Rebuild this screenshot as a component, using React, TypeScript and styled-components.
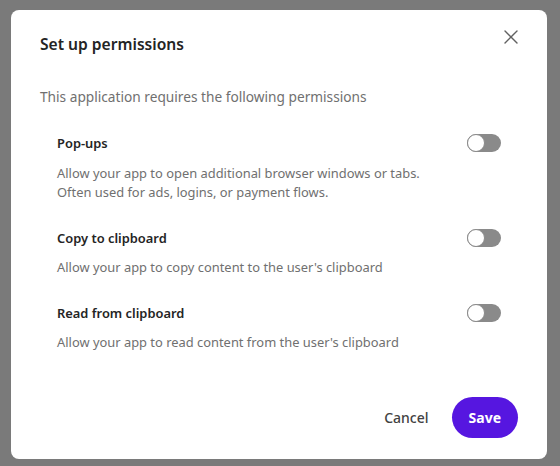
import React from "react";
import styled, { createGlobalStyle } from "styled-components";

const Global = createGlobalStyle`
  html, body { margin: 0; padding: 0; }
  body {
    background: #7a7a7a;
    font-family: "Noto Sans", "Open Sans", sans-serif;
    -webkit-font-smoothing: antialiased;
  }
`;

const Backdrop = styled.div`
  width: 560px;
  height: 466px;
  box-sizing: border-box;
  padding: 10px 13px 7px 11px;
  display: flex;
`;

const Dialog = styled.div`
  flex: 1;
  background: #ffffff;
  border-radius: 8px;
  box-sizing: border-box;
  padding: 22px 29px 21px 29px;
  display: flex;
  flex-direction: column;
`;

const Header = styled.div`
  display: flex;
  align-items: center;
  justify-content: space-between;
  height: 24px;
`;

const Title = styled.h2`
  margin: 0;
  font-size: 15.6px;
  font-weight: 600;
  color: #242424;
`;

const CloseButton = styled.button`
  align-self: flex-start;
  margin: -5px -3px 0 0;
  border: none;
  background: none;
  padding: 0;
  width: 20px;
  height: 20px;
  display: flex;
  align-items: center;
  justify-content: center;
  cursor: pointer;
  color: #616161;
`;

const Subtitle = styled.p`
  margin: 31px 0 0 0;
  font-size: 13.7px;
  color: #707070;
  line-height: 20px;
`;

const List = styled.div`
  margin-top: 26px;
  padding: 0 17px;
  display: flex;
  flex-direction: column;
  gap: 25px;
`;

const Item = styled.div`
  display: flex;
  flex-direction: column;
`;

const ItemHead = styled.div`
  display: flex;
  align-items: center;
  justify-content: space-between;
  height: 20px;
`;

const Label = styled.span`
  font-size: 12.9px;
  font-weight: 600;
  color: #242424;
`;

const Desc = styled.p`
  margin: 10.5px 0 0 0;
  font-size: 12.9px;
  line-height: 19.5px;
  color: #707070;
`;

const Track = styled.span`
  width: 34px;
  height: 18px;
  border-radius: 9px;
  background: #8a8a8a;
  position: relative;
  display: inline-block;
  flex-shrink: 0;
`;

const Knob = styled.span`
  position: absolute;
  left: 0;
  top: 0;
  width: 18px;
  height: 18px;
  box-sizing: border-box;
  border-radius: 50%;
  background: #ffffff;
  border: 1.5px solid #8a8a8a;
`;

const Footer = styled.div`
  margin-top: auto;
  display: flex;
  justify-content: flex-end;
  align-items: center;
  gap: 11px;
`;

const Button = styled.button<{ $primary?: boolean }>`
  font-family: inherit;
  font-size: 14px;
  font-weight: ${(p) => (p.$primary ? 700 : 500)};
  height: 41px;
  padding: 0 ${(p) => (p.$primary ? "17px" : "12px")};
  border-radius: 21px;
  border: none;
  cursor: pointer;
  color: ${(p) => (p.$primary ? "#ffffff" : "#424242")};
  background: ${(p) => (p.$primary ? "#5616e0" : "transparent")};
`;

const Toggle = () => (
  <Track>
    <Knob />
  </Track>
);

const items = [
  {
    label: "Pop-ups",
    desc: [
      "Allow your app to open additional browser windows or tabs.",
      "Often used for ads, logins, or payment flows.",
    ],
  },
  {
    label: "Copy to clipboard",
    desc: ["Allow your app to copy content to the user's clipboard"],
  },
  {
    label: "Read from clipboard",
    desc: ["Allow your app to read content from the user's clipboard"],
  },
];

export default function App() {
  return (
    <>
      <Global />
      <Backdrop>
        <Dialog>
          <Header>
            <Title>Set up permissions</Title>
            <CloseButton aria-label="Close">
              <svg width="14" height="14" viewBox="0 0 14 14">
                <path d="M1 1 L13 13 M13 1 L1 13" stroke="currentColor" strokeWidth="1.4" strokeLinecap="round" />
              </svg>
            </CloseButton>
          </Header>
          <Subtitle>This application requires the following permissions</Subtitle>
          <List>
            {items.map((it) => (
              <Item key={it.label}>
                <ItemHead>
                  <Label>{it.label}</Label>
                  <Toggle />
                </ItemHead>
                <Desc>
                  {it.desc.map((d, i) => (
                    <React.Fragment key={i}>
                      {d}
                      {i < it.desc.length - 1 && <br />}
                    </React.Fragment>
                  ))}
                </Desc>
              </Item>
            ))}
          </List>
          <Footer>
            <Button>Cancel</Button>
            <Button $primary>Save</Button>
          </Footer>
        </Dialog>
      </Backdrop>
    </>
  );
}
